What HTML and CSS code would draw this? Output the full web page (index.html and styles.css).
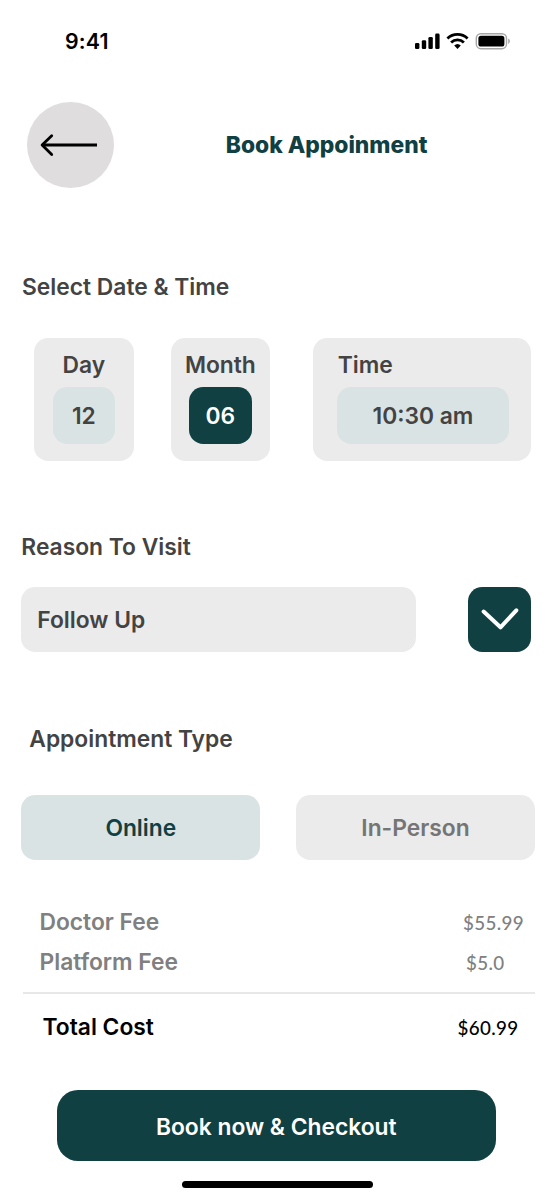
FILE: index.html
```
<!DOCTYPE html>
<html lang="en">
<head>
<meta charset="utf-8">
<title>Book Appoinment</title>
<link rel="stylesheet" href="styles.css">
</head>
<body>
<main class="screen">
  <div class="status">
    <span class="clock">9:41</span>
    <svg class="status-icons" width="96" height="18" viewBox="0 0 96 18">
      <rect x="0" y="11" width="4.4" height="6" rx="1.3"/>
      <rect x="6.8" y="8.2" width="4.4" height="8.8" rx="1.3"/>
      <rect x="13.4" y="5" width="4.4" height="12" rx="1.3"/>
      <rect x="20.2" y="1.6" width="4.4" height="15.4" rx="1.3"/>
      <g fill="none" stroke="#000" stroke-width="2.8">
        <path d="M32.4 6.5A14.6 14.6 0 0 1 52.6 6.5"/>
        <path d="M36.1 10.4A9.2 9.2 0 0 1 48.9 10.4"/>
      </g>
      <path d="M39.2 13.5A4.8 4.8 0 0 1 45.8 13.5L42.5 16.9Z"/>
      <rect x="61.3" y="1.7" width="30.2" height="15" rx="4.6" fill="none" stroke="#a6a6a6" stroke-width="1.4"/>
      <rect x="63.4" y="3.8" width="26" height="10.8" rx="2.6"/>
      <path d="M93.2 6.6C95.4 7.5 95.4 11 93.2 11.9Z" fill="#a6a6a6"/>
    </svg>
  </div>

  <header class="header">
    <button class="back" aria-label="Back">
      <svg width="60" height="24" viewBox="0 0 60 24" fill="none" stroke="#000" stroke-width="2.8">
        <path d="M3 12H58"/>
        <path d="M12.7 2.7L3.1 12L12.7 21.4" stroke-linecap="round" stroke-linejoin="round"/>
      </svg>
    </button>
    <h1 class="title">Book Appoinment</h1>
  </header>

  <h2 class="heading heading-date">Select Date &amp; Time</h2>
  <section class="pickers">
    <div class="card card-day"><span>Day</span><div class="value">12</div></div>
    <div class="card card-month"><span>Month</span><div class="value value-active">06</div></div>
    <div class="card card-time"><span>Time</span><div class="value">10:30 am</div></div>
  </section>

  <h2 class="heading heading-reason">Reason To Visit</h2>
  <section class="reason">
    <div class="select">Follow Up</div>
    <button class="toggle" aria-label="Open list">
      <svg width="40" height="26" viewBox="0 0 40 26" fill="none" stroke="#fff" stroke-width="4" stroke-linecap="round" stroke-linejoin="round">
        <path d="M3.6 4.5L20.5 20.3L36.3 3.3"/>
      </svg>
    </button>
  </section>

  <h2 class="heading heading-type">Appointment Type</h2>
  <section class="types">
    <button class="type type-active">Online</button>
    <button class="type">In-Person</button>
  </section>

  <section class="fees">
    <div class="fee fee-doctor"><span>Doctor Fee</span><span class="price">$55.99</span></div>
    <div class="fee fee-platform"><span>Platform Fee</span><span class="price">$5.0</span></div>
    <div class="fee fee-total"><span>Total Cost</span><span class="price">$60.99</span></div>
  </section>

  <button class="checkout">Book now &amp; Checkout</button>
  <div class="home-bar"></div>
</main>
</body>
</html>
```
FILE: styles.css
```
* {
  box-sizing: border-box;
}

body {
  margin: 0;
  background: #fff;
}

button {
  border: 0;
  padding: 0;
  font: inherit;
}

.screen {
  display: flex;
  flex-direction: column;
  width: 555px;
  height: 1200px;
  overflow: hidden;
  font: 560 22.8px/28px Inter, sans-serif;
  color: #434343;
}

.status {
  display: flex;
  justify-content: space-between;
  align-items: center;
  height: 28px;
  margin: 27px 44px 0 65px;
}

.clock {
  font-size: 21.3px;
  font-weight: 560;
  letter-spacing: 0.2px;
  color: #000;
}

.header {
  display: flex;
  align-items: center;
  height: 86px;
  margin: 47px 0 0 27px;
}

.back {
  display: flex;
  align-items: center;
  padding-left: 12px;
  width: 87px;
  height: 86px;
  border-radius: 50%;
  background: #dfdddd;
}

.title {
  margin: 0 0 0 111.8px;
  font-size: 22.8px;
  font-weight: 770;
  color: #104042;
}

.heading {
  margin: 0;
  font-size: 22.8px;
  font-weight: 560;
}

.heading-date {
  margin: 85px 0 0 22px;
}

.pickers {
  display: flex;
  margin: 37px 0 0 34px;
}

.card {
  display: flex;
  flex-direction: column;
  align-items: center;
  gap: 8px;
  width: 99.6px;
  height: 122.6px;
  padding-top: 13px;
  border-radius: 14.2px;
  background: #ebebeb;
}

.card-month {
  margin-left: 37px;
}

.card-time {
  align-items: flex-start;
  width: 218px;
  margin-left: 42.6px;
  padding-left: 24px;
}

.card-time span {
  padding-left: 1px;
}

.value {
  display: flex;
  justify-content: center;
  align-items: center;
  width: 62.6px;
  height: 56.8px;
  padding-top: 2px;
  border-radius: 14.2px;
  background: #dae3e4;
}

.card-time .value {
  width: 172.4px;
}

.value-active {
  background: #104042;
  color: #fff;
}

.heading-reason {
  margin: 72.4px 0 0 21.3px;
}

.reason {
  display: flex;
  justify-content: space-between;
  height: 65.5px;
  margin: 26px 24px 0 21.3px;
}

.select {
  width: 394.3px;
  padding: 19px 16px;
  border-radius: 14.2px;
  background: #ebebeb;
}

.toggle {
  display: flex;
  justify-content: center;
  align-items: center;
  width: 62.7px;
  border-radius: 14.2px;
  background: #104042;
}

.heading-type {
  margin: 72.6px 0 0 29.3px;
}

.types {
  display: flex;
  justify-content: space-between;
  height: 65.5px;
  margin: 41.5px 20px 0 21.3px;
}

.type {
  width: 239px;
  padding-top: 2px;
  border-radius: 14.2px;
  background: #ebebeb;
  color: #757575;
}

.type-active {
  background: #dae3e4;
  color: #104042;
}

.fees {
  margin: 48px 20px 0 23px;
}

.fee {
  display: flex;
  justify-content: space-between;
  color: #808080;
}

.price {
  font: 500 18.8px/28px Lato, sans-serif;
  letter-spacing: 0.35px;
  padding-top: 1px;
}

.fee-doctor {
  padding: 0 11px 0 16.5px;
}

.fee-platform {
  height: 46px;
  margin-top: 10.8px;
  padding: 0 30.5px 0 16.5px;
  border-bottom: 2px solid #e8e8e8;
}

.fee-total {
  margin-top: 19.5px;
  padding: 0 16.5px 0 19.5px;
  color: #000;
}

.checkout {
  height: 71px;
  margin: 47.8px 59.5px 0 57px;
  padding-top: 3px;
  border-radius: 21px;
  background: #104042;
  color: #fff;
}

.home-bar {
  width: 191px;
  height: 7.4px;
  margin: 19.8px 0 0 182px;
  border-radius: 4px;
  background: #000;
}
```
